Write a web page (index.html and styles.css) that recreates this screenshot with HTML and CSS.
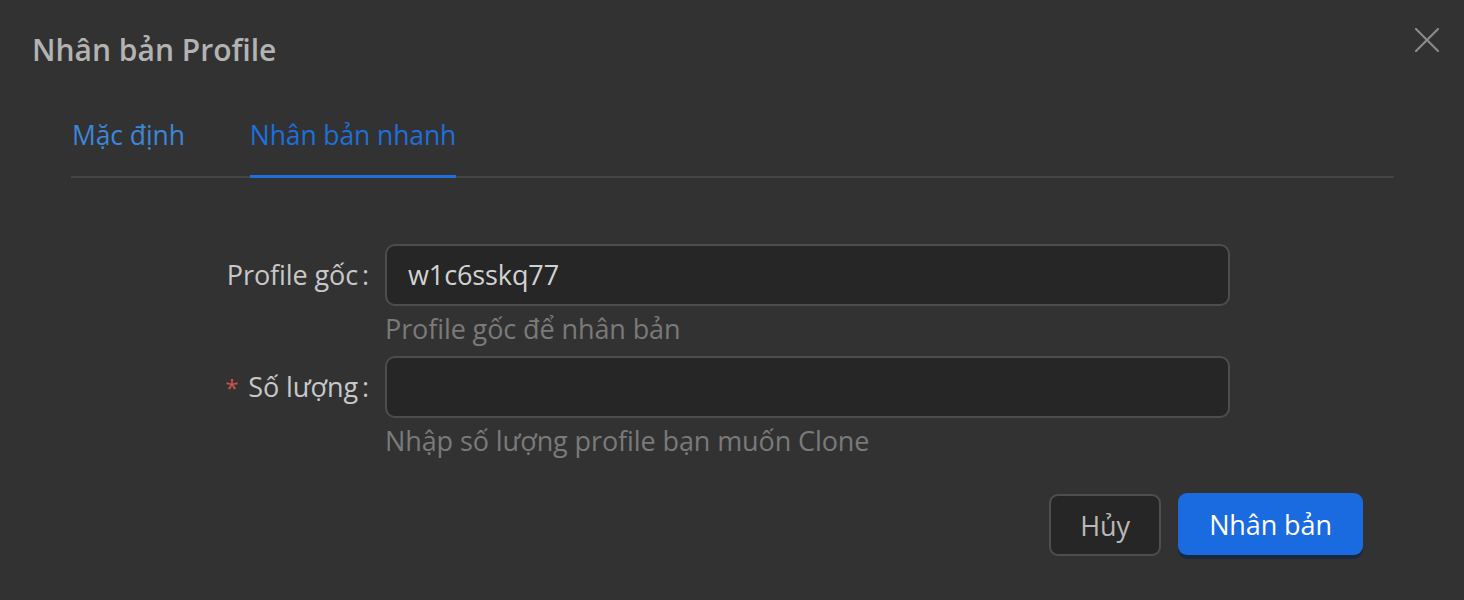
FILE: index.html
```html
<!DOCTYPE html>
<html lang="vi">
<head>
<meta charset="utf-8">
<title>Nhân bản Profile</title>
<link rel="stylesheet" href="styles.css">
</head>
<body>
<div class="dialog">
  <header class="head">
    <h1 class="title">Nhân bản Profile</h1>
    <button class="close" aria-label="Đóng">
      <svg width="24" height="24" viewBox="0 0 24 24"><path d="M1 1 L23 23 M23 1 L1 23" stroke="#8a8a8a" stroke-width="2.2" stroke-linecap="square" fill="none"/></svg>
    </button>
  </header>
  <nav class="tabs">
    <div class="tab">Mặc định</div>
    <div class="tab active">Nhân bản nhanh</div>
  </nav>
  <div class="form">
    <div class="row">
      <label class="label">Profile gốc<span class="colon">:</span></label>
      <div class="ctl">
        <div class="input">w1c6sskq77</div>
        <div class="help">Profile gốc để nhân bản</div>
      </div>
    </div>
    <div class="row">
      <label class="label"><span class="req">*</span>Số lượng<span class="colon">:</span></label>
      <div class="ctl">
        <div class="input"></div>
        <div class="help">Nhập số lượng profile bạn muốn Clone</div>
      </div>
    </div>
  </div>
  <div class="footer">
    <button class="btn">Hủy</button>
    <button class="btn primary">Nhân bản</button>
  </div>
</div>
</body>
</html>
```

FILE: styles.css
```css
* { box-sizing: border-box; }
html, body { margin: 0; padding: 0; }
body {
  background: #323232;
  font-family: "Open Sans", "Noto Sans", sans-serif;
  width: 1464px;
  height: 600px;
  overflow: hidden;
}
.dialog { width: 1464px; height: 600px; }
.head {
  display: flex;
  justify-content: space-between;
  align-items: flex-start;
  padding: 28px 25px 0 32px;
}
.title {
  margin: 0;
  font-size: 30px;
  line-height: 44px;
  font-weight: 600;
  color: #b3b3b3;
  letter-spacing: 0;
}
.close {
  background: none;
  border: 0;
  padding: 0;
  width: 24px;
  height: 24px;
  display: block;
}
.close svg { display: block; }
.tabs {
  display: flex;
  gap: 65px;
  margin: 43px 70px 0 71px;
  border-bottom: 2px solid #454545;
  padding-left: 1px;
}
.tab {
  font-size: 26.5px;
  line-height: 40px;
  padding-bottom: 20px;
  color: #3d86d8;
  border-bottom: 3px solid transparent;
  margin-bottom: -2px;
  letter-spacing: -0.1px;
}
.tab.active {
  color: #1f6fdc;
  border-bottom-color: #1e6ee0;
}
.form { margin-top: 66px; }
.row { display: flex; }
.label {
  flex: 0 0 385px;
  padding-right: 16px;
  text-align: right;
  font-size: 27px;
  line-height: 62px;
  height: 62px;
  color: #c8c8c8;
  letter-spacing: -0.1px;
}
.colon { margin-left: 4px; }
.req { color: #d0514d; margin-right: 10px; font-size: 24px; }
.ctl { width: 845px; }
.input {
  height: 62px;
  border: 2px solid #4d4d4d;
  border-radius: 10px;
  background: #262626;
  padding: 0 21px;
  font-size: 27px;
  line-height: 58px;
  color: #d2d2d2;
  letter-spacing: -0.1px;
}
.help {
  margin: 3px 0 7px;
  font-size: 27px;
  line-height: 40px;
  color: #7a7a7a;
  letter-spacing: -0.1px;
}
.footer {
  display: flex;
  justify-content: flex-end;
  align-items: flex-start;
  gap: 17px;
  padding-right: 101px;
  margin-top: 25px;
}
.btn {
  font-family: "Open Sans", "Noto Sans", sans-serif;
  font-size: 27px;
  height: 62px;
  border-radius: 9px;
  border: 2px solid #4e4e4e;
  background: #262626;
  color: #b8b8b8;
  width: 112px;
  padding: 0;
  margin-top: 1px;
  letter-spacing: -0.1px;
}
.btn.primary {
  width: 185px;
  margin-top: 0;
  border: 0;
  background: #1a6ae0;
  color: #ffffff;
  box-shadow: 0 4px 0 #1b2940;
}
```
